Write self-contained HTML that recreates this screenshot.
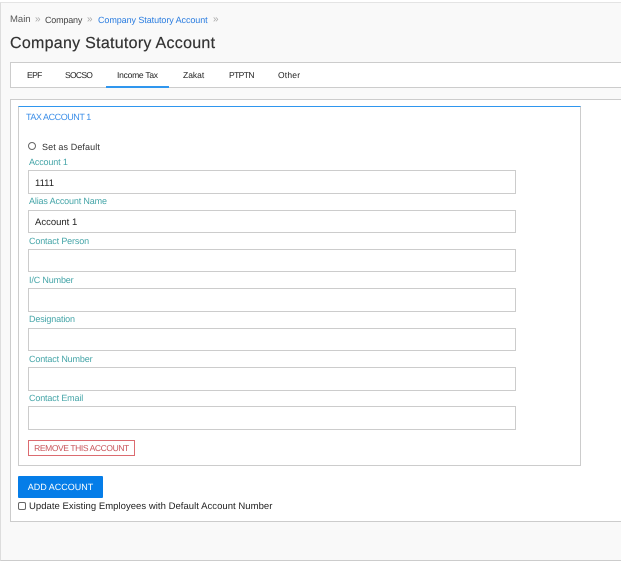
<!DOCTYPE html>
<html>
<head>
<meta charset="utf-8">
<style>
html,body{margin:0;padding:0;background:#fff;}
body{position:relative;width:621px;height:562px;overflow:hidden;font-family:"Liberation Sans",sans-serif;font-size:9px;color:#333;text-rendering:geometricPrecision;}
.a{position:absolute;white-space:nowrap;box-sizing:border-box;}
.t{line-height:14px;height:14px;}
.inp{position:absolute;left:28px;width:488px;height:24px;border:1px solid #ccc;background:#fff;box-sizing:border-box;font-size:9.5px;line-height:25px;padding-left:6px;color:#222;}
.lab{position:absolute;left:29px;line-height:14px;height:14px;font-size:9px;letter-spacing:-.15px;color:#45a5a8;white-space:nowrap;}
.tab{position:absolute;top:68px;line-height:14px;font-size:8.5px;color:#222;white-space:nowrap;}
</style>
</head>
<body>
<div class="a" style="left:0;top:2px;width:621px;height:559px;background:#f9f9f9;border-top:1px solid #e4e4e4;border-left:1px solid #ddd;border-bottom:1px solid #ccc;"></div>

<div class="a t" style="left:10px;top:13px;font-size:9.5px;color:#555;">Main</div>
<div class="a t" style="left:35px;top:13px;font-size:10px;color:#aaa;">»</div>
<div class="a t" style="left:45px;top:13px;letter-spacing:-.2px;color:#444;">Company</div>
<div class="a t" style="left:87px;top:13px;font-size:10px;color:#aaa;">»</div>
<div class="a t" style="left:98px;top:13px;letter-spacing:-.08px;color:#2b7de0;">Company Statutory Account</div>
<div class="a t" style="left:213px;top:13px;font-size:10px;color:#aaa;">»</div>

<div class="a" style="left:10px;top:34px;font-size:16px;line-height:20px;color:#333;letter-spacing:.28px;-webkit-text-stroke:.2px #333;">Company Statutory Account</div>

<div class="a" style="left:10px;top:62px;width:611px;height:26px;background:#fff;border:1px solid #ccc;border-right:0;"></div>
<div class="tab" style="left:27px;letter-spacing:-.6px;">EPF</div>
<div class="tab" style="left:65px;letter-spacing:-.7px;">SOCSO</div>
<div class="tab" style="left:117px;letter-spacing:-.25px;">Income Tax</div>
<div class="tab" style="left:183px;">Zakat</div>
<div class="tab" style="left:229px;letter-spacing:-.6px;">PTPTN</div>
<div class="tab" style="left:278px;letter-spacing:.2px;">Other</div>
<div class="a" style="left:106px;top:86px;width:63px;height:2px;background:#2f96ee;"></div>

<div class="a" style="left:10px;top:99px;width:611px;height:423px;background:#fff;border:1px solid #ccc;border-right:0;"></div>
<div class="a" style="left:18px;top:106px;width:563px;height:360px;background:#fff;border:1px solid #ccc;border-top:1px solid #2f96ee;"></div>
<div class="a t" style="left:26px;top:110px;letter-spacing:-.45px;color:#3b8ee8;">TAX ACCOUNT 1</div>

<div class="a" style="left:28px;top:142px;width:8px;height:8px;border:1px solid #666;border-radius:50%;background:#fff;"></div>
<div class="a t" style="left:42px;top:140px;letter-spacing:.1px;color:#333;">Set as Default</div>

<div class="lab" style="top:155px;">Account 1</div>
<div class="inp" style="top:170px;">1111</div>
<div class="lab" style="top:194px;">Alias Account Name</div>
<div class="inp" style="top:210px;height:23px;line-height:23px;">Account 1</div>
<div class="lab" style="top:234px;">Contact Person</div>
<div class="inp" style="top:249px;height:23px;"></div>
<div class="lab" style="top:273px;">I/C Number</div>
<div class="inp" style="top:288px;"></div>
<div class="lab" style="top:312px;">Designation</div>
<div class="inp" style="top:328px;height:23px;"></div>
<div class="lab" style="top:352px;">Contact Number</div>
<div class="inp" style="top:367px;"></div>
<div class="lab" style="top:391px;">Contact Email</div>
<div class="inp" style="top:406px;"></div>

<div class="a" style="left:28px;top:440px;width:107px;height:16px;border:1px solid #dc6b70;background:#fff;color:#c9555b;font-size:8.5px;letter-spacing:-.4px;line-height:14px;text-align:center;">REMOVE THIS ACCOUNT</div>

<div class="a" style="left:18px;top:476px;width:85px;height:22px;background:#057de8;border-radius:1px;color:#fff;font-size:9px;line-height:23px;text-align:center;">ADD ACCOUNT</div>

<div class="a" style="left:18px;top:502px;width:8px;height:8px;border:1px solid #666;border-radius:2px;background:#fff;"></div>
<div class="a t" style="left:29px;top:500px;font-size:9.5px;letter-spacing:.04px;color:#222;">Update Existing Employees with Default Account Number</div>
</body>
</html>
